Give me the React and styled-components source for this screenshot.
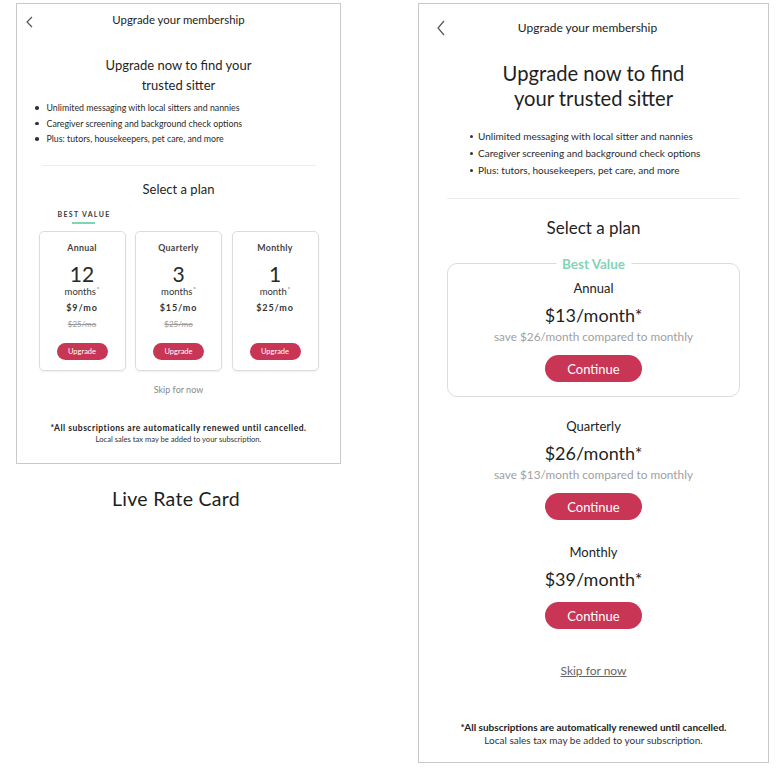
import React from 'react';
import styled, { createGlobalStyle } from 'styled-components';

const GlobalStyle = createGlobalStyle`
  html, body {
    margin: 0;
    padding: 0;
    background: #fff;
  }
  body {
    font-family: Lato, "Liberation Sans", sans-serif;
    color: #2b2b2b;
  }
`;

const CRIMSON = '#c93555';
const MINT = '#7fd5b6';

const Page = styled.div`
  display: flex;
  align-items: flex-start;
  gap: 77px;
  padding: 3px 0 0 16px;
`;

const LeftColumn = styled.div`
  display: flex;
  flex-direction: column;
  align-items: center;
`;

const Panel = styled.div`
  box-sizing: border-box;
  width: ${({ wide }) => (wide ? 351 : 325)}px;
  height: ${({ wide }) => (wide ? 760 : 461)}px;
  border: 1px solid #c9c9c9;
  display: flex;
  flex-direction: column;
  align-items: center;
`;

const Caption = styled.div`
  margin: 23px 5px 0 0;
  font-size: 19.5px;
  line-height: 24px;
  color: #1e1e1e;
  letter-spacing: 0.3px;
`;

/* header row */
const Header = styled.div`
  width: 100%;
  display: grid;
  grid-template-columns: ${({ big }) => (big ? '44px 1fr 56px' : '44px 1fr 44px')};
  align-items: center;
  height: ${({ big }) => (big ? 47 : 31)}px;
`;

const BackBtn = styled.div`
  display: flex;
  align-items: center;
  padding-left: ${({ big }) => (big ? 18 : 9)}px;
  padding-top: ${({ big }) => (big ? 1 : 5)}px;
`;

const Title = styled.div`
  text-align: center;
  font-size: ${({ big }) => (big ? 12 : 11.4)}px;
  color: #222;
`;

const Chevron = ({ w, h }) => (
  <svg width={w} height={h} viewBox={`0 0 ${w} ${h}`}>
    <polyline
      points={`${w - 1},1 1,${h / 2} ${w - 1},${h - 1}`}
      fill="none"
      stroke="#555"
      strokeWidth="1.2"
    />
  </svg>
);

const Heading = styled.h1`
  margin: ${({ big }) => (big ? '10px 0 0' : '20px 0 0')};
  font-weight: 400;
  text-align: center;
  font-size: ${({ big }) => (big ? 20.2 : 13)}px;
  line-height: ${({ big }) => (big ? 25 : 20)}px;
  color: #1f1f1f;
`;

const Bullets = styled.ul`
  list-style: none;
  margin: ${({ big }) => (big ? '17px 0 0' : '5px 0 0')};
  padding: 0;
  align-self: flex-start;
  margin-left: ${({ big }) => (big ? 51 : 18)}px;
`;

const Bullet = styled.li`
  display: flex;
  align-items: center;
  font-size: ${({ big }) => (big ? 10 : 8.8)}px;
  line-height: ${({ big }) => (big ? 17 : 15.5)}px;
  color: #2a2a2a;
  &::before {
    content: '';
    width: ${({ big }) => (big ? 3 : 3.5)}px;
    height: ${({ big }) => (big ? 3 : 3.5)}px;
    border-radius: 50%;
    background: #333;
    margin-right: ${({ big }) => (big ? 5 : 8)}px;
  }
`;

const Divider = styled.div`
  height: 1px;
  background: #ececec;
  width: ${({ big }) => (big ? 293 : 274)}px;
  margin-top: ${({ big }) => (big ? 19 : 18)}px;
`;

const SectionTitle = styled.h2`
  margin: ${({ big }) => (big ? '18px 0 0' : '14px 0 0')};
  font-weight: 400;
  font-size: ${({ big }) => (big ? 17 : 13)}px;
  line-height: ${({ big }) => (big ? 22 : 18)}px;
  color: #1f1f1f;
`;

/* left panel: plan cards */
const CardGrid = styled.div`
  display: grid;
  grid-template-columns: repeat(3, 87px);
  column-gap: 9.5px;
`;

const BestLabel = styled.div`
  grid-column: 1;
  justify-self: center;
  margin: 11px 0 0 4px;
  display: flex;
  flex-direction: column;
  align-items: center;
  font-size: 7px;
  line-height: 10px;
  font-weight: 700;
  letter-spacing: 1.3px;
  color: #3a3a3a;
  &::after {
    content: '';
    width: 23px;
    height: 2px;
    background: ${MINT};
    margin-top: 3px;
  }
`;

const MiniCard = styled.div`
  box-sizing: border-box;
  height: 140px;
  margin-top: 7px;
  border: 1px solid #dcdcdc;
  border-radius: 5px;
  box-shadow: 0 1px 2px rgba(0, 0, 0, 0.07);
  display: flex;
  flex-direction: column;
  align-items: center;
  padding-top: 9px;
`;

const MiniName = styled.div`
  font-size: 8.8px;
  line-height: 14px;
  font-weight: 700;
  color: #444;
  letter-spacing: 0.3px;
`;

const MiniCount = styled.div`
  margin-top: 7px;
  font-size: 21px;
  line-height: 24px;
  color: #2a2a2a;
`;

const MiniUnit = styled.div`
  font-size: 9.5px;
  line-height: 12px;
  color: #333;
  sup {
    font-size: 6px;
    vertical-align: top;
    line-height: 6px;
    margin-left: 1px;
  }
`;

const MiniPrice = styled.div`
  margin-top: 3px;
  font-size: 9px;
  line-height: 14px;
  font-weight: 700;
  letter-spacing: 0.9px;
  color: #333;
`;

const MiniOld = styled.div`
  margin-top: 3px;
  height: 12px;
  font-size: 8px;
  line-height: 12px;
  color: #9a9a9a;
  text-decoration: line-through;
`;

const MiniButton = styled.button`
  margin-top: 13px;
  width: 51px;
  height: 17px;
  border: 0;
  border-radius: 9px;
  background: ${CRIMSON};
  color: #fff;
  font-family: inherit;
  font-size: 7.5px;
  padding: 0;
`;

const SkipSmall = styled.div`
  margin-top: 12px;
  font-size: 9px;
  line-height: 14px;
  color: #888;
`;

const Footnote = styled.div`
  margin-top: ${({ big }) => (big ? 42 : 26)}px;
  text-align: center;
  font-size: ${({ big }) => (big ? 10 : 7.6)}px;
  line-height: ${({ big }) => (big ? 13 : 11)}px;
  color: #333;
  strong {
    display: block;
    font-size: ${({ big }) => (big ? 10 : 8.5)}px;
    letter-spacing: ${({ big }) => (big ? 0 : 0.5)}px;
    color: #222;
  }
`;

/* right panel: stacked plans */
const PlanList = styled.div`
  display: flex;
  flex-direction: column;
  align-items: center;
  gap: 16px;
  margin-top: 24px;
`;

const Plan = styled.div`
  position: relative;
  box-sizing: border-box;
  width: 293px;
  display: flex;
  flex-direction: column;
  align-items: center;
  border: 1px solid ${({ featured }) => (featured ? '#dcdcdc' : 'transparent')};
  border-radius: 10px;
  padding: ${({ featured }) => (featured ? '12px 0 14px' : '0')};
  margin-top: ${({ spaced }) => (spaced ? 2 : 0)}px;
`;

const Badge = styled.div`
  position: absolute;
  top: 0;
  left: 50%;
  transform: translate(-50%, -50%);
  background: #fff;
  padding: 0 6px;
  font-size: 13.5px;
  line-height: 16px;
  font-weight: 700;
  color: ${MINT};
  white-space: nowrap;
`;

const PlanName = styled.div`
  font-size: 13px;
  line-height: 24px;
  color: #222;
`;

const PlanPrice = styled.div`
  font-size: 18px;
  line-height: 30px;
  color: #1f1f1f;
`;

const PlanSave = styled.div`
  font-size: 11.8px;
  line-height: 14px;
  color: #a0a0a0;
`;

const ContinueButton = styled.button`
  margin-top: ${({ tight }) => (tight ? 8 : 11)}px;
  width: 97px;
  height: 27px;
  border: 0;
  border-radius: 14px;
  background: ${CRIMSON};
  color: #fff;
  font-family: inherit;
  font-size: 13px;
  padding: 0;
`;

const SkipLink = styled.a`
  margin-top: 33px;
  font-size: 12px;
  line-height: 16px;
  color: #666;
  text-decoration: underline;
`;

const miniPlans = [
  { name: 'Annual', count: 12, unit: 'months', price: '$9/mo', old: '$25/mo' },
  { name: 'Quarterly', count: 3, unit: 'months', price: '$15/mo', old: '$25/mo' },
  { name: 'Monthly', count: 1, unit: 'month', price: '$25/mo', old: '' },
];

const plans = [
  { name: 'Annual', price: '$13/month*', save: 'save $26/month compared to monthly', featured: true },
  { name: 'Quarterly', price: '$26/month*', save: 'save $13/month compared to monthly' },
  { name: 'Monthly', price: '$39/month*' },
];

const bulletsSmall = [
  'Unlimited messaging with local sitters and nannies',
  'Caregiver screening and background check options',
  'Plus: tutors, housekeepers, pet care, and more',
];

const bulletsBig = [
  'Unlimited messaging with local sitter and nannies',
  'Caregiver screening and background check options',
  'Plus: tutors, housekeepers, pet care, and more',
];

export default function App() {
  return (
    <>
      <GlobalStyle />
      <Page>
        <LeftColumn>
          <Panel>
            <Header>
              <BackBtn>
                <Chevron w={7} h={12} />
              </BackBtn>
              <Title>Upgrade your membership</Title>
            </Header>
            <Heading>
              Upgrade now to find your
              <br />
              trusted sitter
            </Heading>
            <Bullets>
              {bulletsSmall.map((b) => (
                <Bullet key={b}>{b}</Bullet>
              ))}
            </Bullets>
            <Divider />
            <SectionTitle>Select a plan</SectionTitle>
            <CardGrid>
              <BestLabel>BEST VALUE</BestLabel>
            </CardGrid>
            <CardGrid>
              {miniPlans.map((p) => (
                <MiniCard key={p.name}>
                  <MiniName>{p.name}</MiniName>
                  <MiniCount>{p.count}</MiniCount>
                  <MiniUnit>
                    {p.unit}
                    <sup>*</sup>
                  </MiniUnit>
                  <MiniPrice>{p.price}</MiniPrice>
                  <MiniOld>{p.old}</MiniOld>
                  <MiniButton>Upgrade</MiniButton>
                </MiniCard>
              ))}
            </CardGrid>
            <SkipSmall>Skip for now</SkipSmall>
            <Footnote>
              <strong>*All subscriptions are automatically renewed until cancelled.</strong>
              Local sales tax may be added to your subscription.
            </Footnote>
          </Panel>
          <Caption>Live Rate Card</Caption>
        </LeftColumn>

        <Panel wide>
          <Header big>
            <BackBtn big>
              <Chevron w={8} h={16} />
            </BackBtn>
            <Title big>Upgrade your membership</Title>
          </Header>
          <Heading big>
            Upgrade now to find
            <br />
            your trusted sitter
          </Heading>
          <Bullets big>
            {bulletsBig.map((b) => (
              <Bullet big key={b}>
                {b}
              </Bullet>
            ))}
          </Bullets>
          <Divider big />
          <SectionTitle big>Select a plan</SectionTitle>
          <PlanList>
            {plans.map((p) => (
              <Plan key={p.name} featured={p.featured} spaced={!p.save}>
                {p.featured && <Badge>Best Value</Badge>}
                <PlanName>{p.name}</PlanName>
                <PlanPrice>{p.price}</PlanPrice>
                {p.save && <PlanSave>{p.save}</PlanSave>}
                <ContinueButton tight={!p.save}>Continue</ContinueButton>
              </Plan>
            ))}
          </PlanList>
          <SkipLink>Skip for now</SkipLink>
          <Footnote big>
            <strong>*All subscriptions are automatically renewed until cancelled.</strong>
            Local sales tax may be added to your subscription.
          </Footnote>
        </Panel>
      </Page>
    </>
  );
}
